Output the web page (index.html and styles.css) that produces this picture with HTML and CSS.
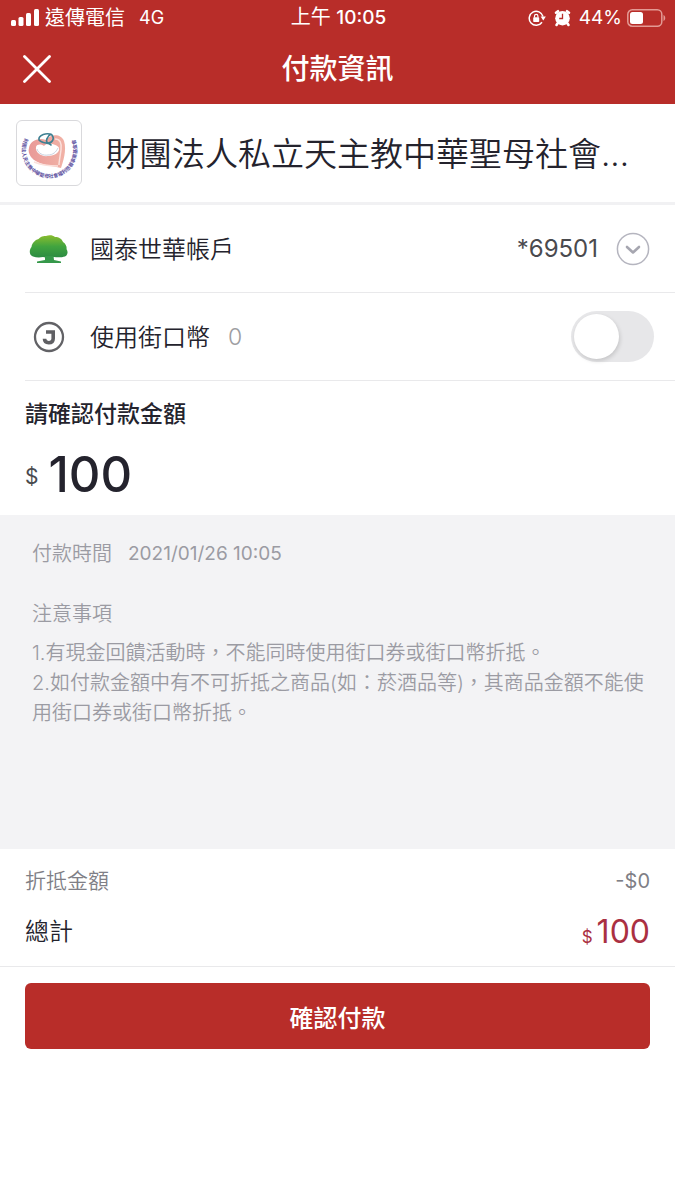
FILE: index.html
```html
<!DOCTYPE html>
<html lang="zh-Hant">
<head>
<meta charset="utf-8">
<meta name="viewport" content="width=device-width, initial-scale=1">
<title>付款資訊</title>
<link rel="stylesheet" href="styles.css">
</head>
<body>
<header class="top">
  <div class="status">
    <div class="status-left">
      <svg class="signal" width="28" height="18" viewBox="0 0 28 18" fill="#fff" aria-hidden="true">
        <rect x="0" y="11" width="5" height="6" rx="1.5"/><rect x="7.500" y="8" width="5" height="9" rx="1.500"/><rect x="15" y="4" width="5" height="13" rx="1.500"/><rect x="23" y="0" width="5" height="17" rx="1.500"/>
      </svg>
      <span>遠傳電信</span><span class="network">4G</span>
    </div>
    <div class="clock">上午 <b>10:05</b></div>
    <div class="status-right">
      <svg width="18" height="18" viewBox="0 0 18 18" fill="none" aria-hidden="true">
        <path d="M15 7.500A7 7 0 1 0 14 13.300" stroke="#fff" stroke-width="1.500"/>
        <path d="M12.600 7.500h5.200l-2.500 4z" fill="#fff"/>
        <rect x="5.200" y="8.300" width="6" height="4.700" rx=".8" fill="#fff"/>
        <path d="M6.500 8.500V7a1.700 1.700 0 0 1 3.400 0v1.500" stroke="#fff" stroke-width="1.200"/>
      </svg>
      <svg class="alarm" width="17" height="18" viewBox="0 0 17 18" fill="none" aria-hidden="true">
        <circle cx="8.500" cy="9.200" r="7.300" fill="#fff"/>
        <path d="M2 3.700 4 2.200M15 3.700 13 2.200M3.500 14.500 2.500 16M13.500 14.500 14.500 16" stroke="#fff" stroke-width="2.600" stroke-linecap="round"/>
        <path d="M8.500 4.800v4.700H5.200" stroke="#b82d29" stroke-width="1.300"/>
      </svg>
      <span>44%</span>
      <svg class="battery" width="39" height="18" viewBox="0 0 39 18" aria-hidden="true">
        <rect x=".8" y=".8" width="34" height="16.400" rx="4.500" fill="none" stroke="#e39a94" stroke-width="1.500"/>
        <rect x="3" y="3" width="13" height="12" rx="2.500" fill="#fff"/>
        <path d="M36.500 6c2.300.8 2.300 5.200 0 6z" fill="#e39a94"/>
      </svg>
    </div>
  </div>
  <div class="nav">
    <button class="close" type="button" aria-label="關閉">
      <svg width="28" height="28" viewBox="0 0 28 28" aria-hidden="true"><path d="M1.500 1.500l25 25M26.500 1.500l-25 25" stroke="#fff" stroke-width="2.800" stroke-linecap="round"/></svg>
    </button>
    <h1 class="title">付款資訊</h1>
  </div>
</header>

<main>
  <section class="merchant">
    <svg class="merchant-logo" viewBox="0 0 64 64" aria-hidden="true">
      <defs>
        <path id="ring" d="M8 17A27.500 27.500 0 1 0 56 15"/>
        <linearGradient id="heart" x1="0" x2="1"><stop offset="0" stop-color="#e99a98"/><stop offset="1" stop-color="#f1b2a6"/></linearGradient>
      </defs>
      <path d="M12 27c1-7 9-11 17-8 4-6 15-7 18 1 3 9-1 21-3 27-8-2-24-3-30-11-2-3-3-6-2-9z" fill="url(#heart)"/>
      <path d="M38 18c5 0 7 4 6 11-1 7-2 12-2 15M17 41c7 3 16 4 24 4" fill="none" stroke="#fbe1dc" stroke-width="1.500"/>
      <path d="M19 26c1-3 5-3 8-1 3-4 13-2 15 2 1 4-4 8-11 8-7 1-13-4-12-9z" fill="#fff"/>
      <path d="M20 28c1 4 6 7 11 6 5 0 8-3 10-7" fill="none" stroke="#c9d2e0" stroke-width="1"/>
      <path d="M34 24c-2-3-9-1-12-5-1-5 8-8 13-5 3 4 0 8-4 8-3-1-1-7 3-9" fill="none" stroke="#3f8092" stroke-width="1.600" stroke-linecap="round"/>
      <text class="ring-text"><textPath href="#ring">財團法人天主教中華聖母社會福利慈善事業基金會</textPath></text>
    </svg>
    <h2 class="merchant-name">財團法人私立天主教中華聖母社會<span>...</span></h2>
  </section>

  <div class="row">
    <svg class="row-icon" width="40" height="30" viewBox="0 0 40 30" aria-hidden="true">
      <defs><linearGradient id="leaf" x1="0" y1="0" x2="0" y2="1"><stop offset="0" stop-color="#8abd2e"/><stop offset=".5" stop-color="#41a43f"/><stop offset="1" stop-color="#2b8b43"/></linearGradient></defs>
      <path d="M4 22.500C0 21 0 16 2.500 13 3 9 6 6 9.500 5c2-2.500 5-3.500 7.500-3 3-1.500 7-1 9 1 4 0 7 2 8 5 3 2 4 5 3.500 7 2 3 1 6.500-1.500 7.500-3 1-8 1-11 .5-3 1-8 1-11 0-3 .7-7 .6-10-.5z" fill="url(#leaf)"/>
      <path d="M16 22h8.500l.5 4 7 1.500V29H8v-1.500l8-1.500z" fill="#36984a"/>
    </svg>
    <span class="row-label">國泰世華帳戶</span>
    <button class="account" type="button" aria-label="選擇帳戶 *69501">
      <span>*69501</span>
      <svg width="34" height="34" viewBox="0 0 34 34" fill="none" aria-hidden="true"><circle cx="17" cy="17" r="15.600" stroke="#b5b5bf" stroke-width="1.500"/><path d="M11 15l6 5.500 6-5.500" stroke="#a6a6b0" stroke-width="2.600" stroke-linecap="round" stroke-linejoin="round"/></svg>
    </button>
  </div>

  <div class="row">
    <svg class="row-icon" width="40" height="32" viewBox="0 0 40 32" fill="none" aria-hidden="true">
      <circle cx="20" cy="16" r="14" stroke="#626266" stroke-width="2.300"/>
      <path d="M17 11h7.200v6.500c0 3-1.500 4.200-4.500 4.200-2.800 0-4.200-1.200-4.200-3.900" stroke="#606064" stroke-width="3.600"/>
    </svg>
    <label class="row-label" for="coin">使用街口幣</label>
    <span class="coin-count">0</span>
    <input class="switch" type="checkbox" role="switch" id="coin">
  </div>

  <section class="confirm">
    <h2 class="confirm-title">請確認付款金額</h2>
    <p class="amount"><span class="currency">$</span><span>100</span></p>
  </section>

  <section class="details">
    <p class="pay-time"><span>付款時間</span><time datetime="2021-01-26T10:05">2021/01/26 10:05</time></p>
    <h3 class="notes-title">注意事項</h3>
    <p>1.有現金回饋活動時，不能同時使用街口券或街口幣折抵。</p>
    <p>2.如付款金額中有不可折抵之商品(如：菸酒品等)，其商品金額不能使用街口券或街口幣折抵。</p>
  </section>

  <section class="summary">
    <div class="discount"><span>折抵金額</span><span class="discount-amount">-$0</span></div>
    <div class="total"><span>總計</span><span class="total-amount"><small>$</small><span>100</span></span></div>
  </section>

  <div class="action"><button class="pay" type="button">確認付款</button></div>
</main>
</body>
</html>
```
FILE: styles.css
```css
* { box-sizing: border-box; }

body {
  margin: 0;
  background: #fff;
  color: #24232d;
  font-family: Inter, "Noto Sans CJK TC", sans-serif;
}

h1, h2, h3, p { margin: 0; font-weight: 400; }

svg { display: block; flex: none; }

button {
  border: 0;
  padding: 0;
  background: none;
  color: inherit;
  font: inherit;
  cursor: pointer;
}

.top { background: #b82d29; color: #fff; }

.status {
  display: grid;
  grid-template-columns: 1fr auto 1fr;
  align-items: center;
  height: 34px;
  padding: 0 9px 0 11px;
  font-size: 20px;
  line-height: 34px;
}

.status-left, .status-right { display: flex; align-items: center; }
.status-left { gap: 6px; }
.network { margin-left: 8px; font-size: 18px; }
.clock b { font-weight: 500; font-size: 19px; }
.status-right { justify-content: flex-end; gap: 5px; font-size: 19px; }
.alarm { margin: 0 3px; }

.nav {
  display: grid;
  grid-template-columns: 50px 1fr 50px;
  align-items: center;
  height: 70px;
  padding: 0 12px;
}

.close { display: grid; place-items: center; height: 50px; }
.title { text-align: center; font-size: 28px; font-weight: 500; line-height: 40px; }

.merchant {
  display: flex;
  align-items: center;
  gap: 24px;
  padding: 16px;
  border-bottom: 3px solid #f1f1f3;
}

.merchant-logo {
  width: 66px;
  height: 66px;
  border: 1px solid #d9d9dc;
  border-radius: 6px;
}

.ring-text { fill: #5d50a0; font-size: 5px; font-weight: 700; }

.merchant-name {
  min-width: 0;
  overflow: hidden;
  padding-top: 2px;
  font-size: 33px;
  font-weight: 350;
  line-height: 48px;
  white-space: nowrap;
}

.row {
  display: flex;
  align-items: center;
  height: 88px;
  margin-left: 25px;
  padding-right: 21px;
  border-bottom: 1px solid #e9e9eb;
}

.row-icon { margin: 0 21px 0 4px; }
.row-label { padding-top: 2px; font-size: 24px; font-weight: 350; line-height: 36px; }

.account {
  display: flex;
  align-items: center;
  gap: 18px;
  margin: 0 4px 0 auto;
  color: #4a4a4e;
  font-size: 24px;
  line-height: 36px;
}

.coin-count { margin-left: 18px; color: #9d9da1; font-size: 23px; font-weight: 300; }

.switch {
  appearance: none;
  width: 83px;
  height: 51px;
  margin: 0 0 0 auto;
  padding: 3px;
  border-radius: 26px;
  background: #e7e7e9;
  cursor: pointer;
}

.switch::before {
  content: "";
  display: block;
  width: 45px;
  height: 45px;
  border-radius: 50%;
  background: #fff;
  box-shadow: 1px 2px 4px rgba(0, 0, 0, 0.15);
}

.switch:checked { background: #b82d29; }
.switch:checked::before { margin-left: auto; }

.confirm { padding: 16px 25px 10px; }
.confirm-title { font-size: 23px; font-weight: 500; line-height: 34px; }

.amount {
  display: flex;
  align-items: center;
  gap: 10px;
  padding-top: 14px;
  font-size: 49px;
  font-weight: 500;
  line-height: 60px;
}

.currency { padding-top: 4px; color: #4a4a4e; font-size: 21px; font-weight: 400; line-height: 30px; }

.details {
  min-height: 334px;
  padding: 24px 25px 24px 32px;
  background: #f3f3f5;
  color: #9b9ba3;
  font-size: 20px;
  font-weight: 350;
  line-height: 30px;
}

.details p, .notes-title { font-weight: inherit; }
.pay-time { display: flex; gap: 16px; }
.pay-time time { font-size: 19px; font-weight: 400; }
.notes-title { padding: 30px 0 9px; font-size: 20px; line-height: 30px; }

.summary {
  padding: 16px 25px 15px;
  border-bottom: 1px solid #e9e9eb;
}

.discount, .total { display: flex; justify-content: space-between; align-items: center; font-weight: 350; }
.discount { color: #7f7f86; font-size: 21px; line-height: 32px; }
.discount-amount { font-size: 20px; font-weight: 400; }
.total { height: 54px; padding-top: 16px; font-size: 24px; line-height: 36px; }
.total-amount { display: flex; align-items: baseline; gap: 4px; color: #aa3042; font-size: 32px; font-weight: 400; }
.total-amount small { font-size: 17px; line-height: 24px; }

.action { padding: 16px 25px; }

.pay {
  width: 100%;
  height: 66px;
  border-radius: 6px;
  background: #b82d29;
  color: #fff;
  font-size: 24px;
  font-weight: 500;
}
```
